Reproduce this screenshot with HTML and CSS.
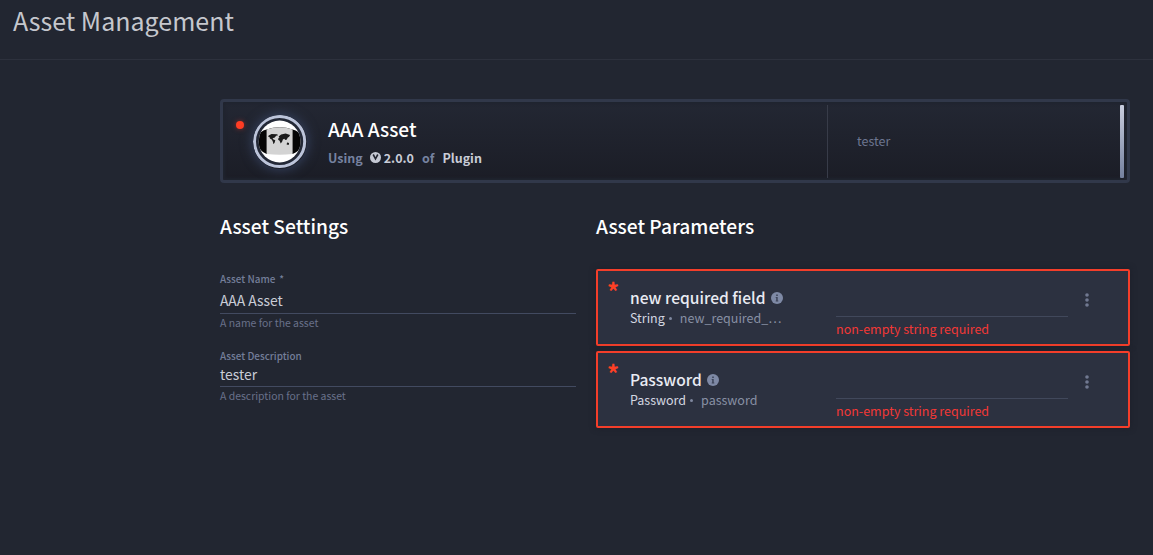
FILE: index.html
```html
<!DOCTYPE html>
<html lang="en">
<head>
<meta charset="utf-8">
<title>Asset Management</title>
<link rel="stylesheet" href="styles.css">
</head>
<body>
<header class="topbar"><h1 class="page-title"><span>Asset Management</span></h1></header>
<main class="content">
  <section class="asset-card">
    <div class="asset-main">
      <span class="status-dot"></span>
      <svg class="avatar" width="54" height="54" viewBox="0.4 0.5 54 54">
        <defs><clipPath id="disc"><circle cx="27" cy="27" r="20.900"/></clipPath>
        <pattern id="checks" width="2" height="2" patternUnits="userSpaceOnUse"><rect width="2" height="2" fill="#dcdcdc"/><path d="M0 0h1v1H0zM1 1h1v1H1z" fill="#c9c9c9"/></pattern></defs>
        <circle cx="27" cy="27" r="25.100" fill="#232836" stroke="#bcc4da" stroke-width="3"/>
        <g clip-path="url(#disc)">
          <circle cx="27" cy="27" r="22" fill="#fff"/>
          <path d="M5 27Q5 17 14 15Q27 10.500 40 15Q49 17 49 27Q49 36 40 39.500H14Q5 36 5 27Z" fill="#050505"/>
          <path d="M14 15Q27 10.500 40 15V39.500Q27 41 14 39.500Z" fill="url(#checks)"/>
          <path d="M16 21l3-1.500 5.500.2 1 1-2 .6-1.300 1.700-2.200.7.5 1.100 2.200 1-.6 2.200-1.200 1.800-.8-3-1-1.700-1.800-1.200-.4-1.300-1.200-.2zM26 22l2.500-2 4.500-1 4.500 1.500-1 1.700-1.500 1-.7 1.700-1.500.6-1.200-1.200-1.300.6-.8 2.400-1.400 1.800-1.100-2.800-1.500-1 .4-1.800 1-.6zM34.500 28l2 .6-.4 1.800-2.100-.4z" fill="#1b1b1b"/>
        </g>
      </svg>
      <div class="asset-info">
        <h2 class="asset-name"><span>AAA Asset</span></h2>
        <div class="asset-version">
          <span class="using">Using</span>
          <svg class="version-icon" width="11" height="11" viewBox="0 0 11 11"><circle cx="5.500" cy="5.500" r="5.500" fill="#c5c9d4"/><path d="M3.200 2.500L5.500 6.800 7.800 2.500" fill="none" stroke="#232631" stroke-width="1.600"/></svg>
          <span class="version">2.0.0</span><span class="of">of</span><span class="plugin">Plugin</span>
        </div>
      </div>
    </div>
    <div class="asset-desc"><span>tester</span></div>
    <div class="asset-bar"></div>
  </section>
  <div class="columns">
    <section class="settings">
      <h2 class="section-title"><span>Asset Settings</span></h2>
      <div class="field">
        <div class="label"><span>Asset Name</span><span class="star">*</span></div>
        <div class="value value-name"><span>AAA Asset</span></div>
        <div class="hint"><span>A name for the asset</span></div>
      </div>
      <div class="field field-desc">
        <div class="label"><span>Asset Description</span></div>
        <div class="value value-desc"><span>tester</span></div>
        <div class="hint hint-desc"><span>A description for the asset</span></div>
      </div>
    </section>
    <section class="params">
      <h2 class="section-title"><span>Asset Parameters</span></h2>
      <div class="param-list">
        <article class="param">
          <span class="required">*</span>
          <div class="param-info">
            <div class="param-name"><span>new required field</span><svg class="info" width="12" height="12" viewBox="0 0 12 12"><circle cx="6" cy="6" r="6" fill="#7e89a5"/><path d="M5.200 2.500h1.600V4H5.200zM4.700 5h2v3.500h.6v1H4.700v-1h.5V6h-.5z" fill="#3c4459"/></svg></div>
            <div class="param-type"><span>String</span><i class="bullet"></i><span class="key">new_required_…</span></div>
          </div>
          <div class="param-input"><div class="input-line"></div><div class="error"><span>non-empty string required</span></div></div>
          <svg class="menu" width="4" height="14" viewBox="0 0 4 14" fill="#717991"><circle cx="2" cy="2" r="1.800"/><circle cx="2" cy="7" r="1.800"/><circle cx="2" cy="12" r="1.800"/></svg>
        </article>
        <article class="param">
          <span class="required">*</span>
          <div class="param-info">
            <div class="param-name"><span>Password</span><svg class="info" width="12" height="12" viewBox="0 0 12 12"><circle cx="6" cy="6" r="6" fill="#7e89a5"/><path d="M5.200 2.500h1.600V4H5.200zM4.700 5h2v3.500h.6v1H4.700v-1h.5V6h-.5z" fill="#3c4459"/></svg></div>
            <div class="param-type"><span>Password</span><i class="bullet"></i><span class="key">password</span></div>
          </div>
          <div class="param-input"><div class="input-line"></div><div class="error"><span>non-empty string required</span></div></div>
          <svg class="menu" width="4" height="14" viewBox="0 0 4 14" fill="#717991"><circle cx="2" cy="2" r="1.800"/><circle cx="2" cy="7" r="1.800"/><circle cx="2" cy="12" r="1.800"/></svg>
        </article>
      </div>
    </section>
  </div>
</main>
</body>
</html>
```
FILE: styles.css
```css
* { box-sizing: border-box; }
body { margin: 0; height: 555px; overflow: hidden; background: #222631; color: #e8eaf1; font: 12.5px/20px "Noto Sans CJK SC", "Noto Sans", sans-serif; white-space: nowrap; }
h1, h2 { margin: 0; }
.topbar { height: 60px; padding: 2px 0 0 13px; border-bottom: 1px solid #2d313d; }
.page-title { font-size: 25px; line-height: 36px; font-weight: 400; color: #c5c7cd; }
.content { padding: 39px 23px 0 220px; }
.asset-card { display: flex; height: 84px; border: 3px solid #31384a; border-radius: 4px; padding: 3px 3px 2px 4px; background: linear-gradient(#232733, #1b1d26); box-shadow: inset 0 0 3px 2px #20242f; }
.asset-main { display: flex; width: 601px; border-right: 1px solid #383c49; }
.status-dot { width: 8px; height: 8px; margin: 16px 0 0 9px; border-radius: 50%; background: #ff3d24; box-shadow: 0 0 5px #882d2d; }
.avatar { margin: 10px 0 0 9px; border-radius: 50%; box-shadow: 0 0 12px 1px #35415e; flex: none; }
.asset-info { margin: 11px 0 0 21px; }
.asset-name { font-size: 19.1px; line-height: 26px; font-weight: 500; color: #fff; }
.asset-version { display: flex; align-items: center; margin-top: 6px; font-size: 12.5px; font-weight: 700; line-height: 20px; color: #c9ccd7; }
.using, .of { color: #7682a0; }
.version-icon { margin: 0 3px 2px 7px; }
.of { margin: 0 8px; }
.asset-desc { flex: 1; padding: 26px 0 0 29px; color: #6d7690; }
.asset-bar { width: 4px; height: 73px; background: linear-gradient(#c9cedf, #74809e); border-radius: 1px; }
.columns { display: grid; grid-template-columns: 356px 534px; column-gap: 20px; padding-top: 28px; }
.section-title { font-size: 19.2px; line-height: 30px; font-weight: 500; color: #fff; }
.field { margin-top: 30px; }
.field-desc { margin-top: 17px; }
.label { display: flex; gap: 4px; font-size: 9.9px; line-height: 16px; font-weight: 500; color: #747e99; }
.value { border-bottom: 1px solid #424a60; font-size: 13.9px; color: #c9ccd6; }
.value-name { height: 27px; line-height: 26px; }
.value-desc { height: 23px; line-height: 20px; }
.hint { font-size: 10.45px; line-height: 17px; color: #69718a; }
.param-list { display: grid; gap: 5px; margin-top: 28px; }
.param { display: flex; height: 77px; border: 2px solid #f43e2a; border-radius: 2px; background: #2c3140; box-shadow: 0 0 6px #1c1f29; }
.required { width: 32px; padding: 9px 0 0 9px; font-size: 24px; line-height: 22px; font-weight: 700; color: #ff4025; }
.param-info { width: 206px; padding-top: 15px; }
.param-name { display: flex; align-items: center; height: 22px; font-size: 15.6px; font-weight: 500; line-height: 22px; color: #e9ebf3; }
.info { margin: 2px 0 0 5px; }
.param-type { display: flex; align-items: center; height: 20px; color: #d4d7e1; }
.bullet { width: 3px; height: 3px; margin: 1px 8px 0 4px; border-radius: 50%; background: #7f889f; }
.key { color: #8890a4; }
.param-input { width: 232px; }
.input-line { height: 46px; border-bottom: 1px solid #41485b; }
.error { margin-top: 2px; color: #f23836; }
.menu { margin: 22px 0 0 17px; }
```
